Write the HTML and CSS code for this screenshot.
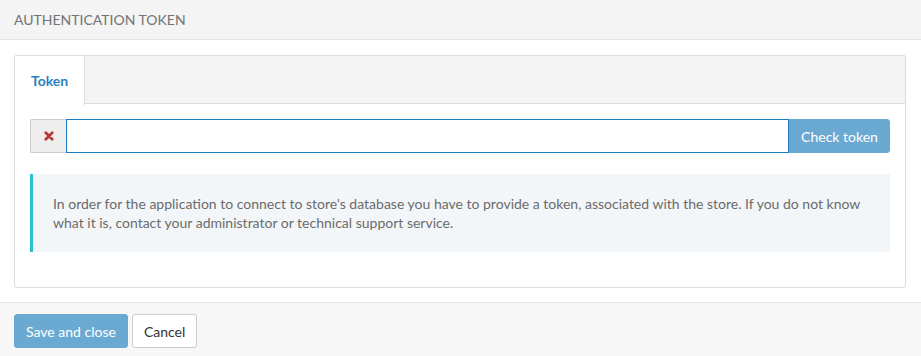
FILE: index.html
```html
<!DOCTYPE html>
<html lang="en">
<head>
  <meta charset="UTF-8">
  <title>Authentication token</title>
  <link rel="stylesheet" href="styles.css">
</head>
<body>
  <div class="modal">
    <div class="modal-header">Authentication token</div>
    <div class="modal-body">
      <div class="panel">
        <div class="tabs">
          <div class="tab active">Token</div>
          <div class="tab-fill"></div>
        </div>
        <div class="panel-body">
          <div class="input-group">
            <span class="addon">
              <svg width="10" height="10" viewBox="0 0 10 10">
                <path d="M1.8 1.8 L8.2 8.2 M8.2 1.8 L1.8 8.2" stroke="#b83a36" stroke-width="2.8" stroke-linecap="round"/>
              </svg>
            </span>
            <input type="text" class="token-input">
            <button type="button" class="btn btn-primary btn-attached">Check token</button>
          </div>
          <div class="info">
            In order for the application to connect to store's database you have to provide a token, associated with the store. If you do not know what it is, contact your administrator or technical support service.
          </div>
        </div>
      </div>
    </div>
    <div class="modal-footer">
      <button type="button" class="btn btn-primary">Save and close</button>
      <button type="button" class="btn btn-default">Cancel</button>
    </div>
  </div>
</body>
</html>
```
FILE: styles.css
```css
body {
  margin: 0;
  font-family: Lato, "Open Sans", sans-serif;
  font-size: 14px;
  color: #333;
  background-color: #fff;
}
.modal {
  width: 921px;
  height: 356px;
  display: flex;
  flex-direction: column;
}
.modal-header {
  height: 39px;
  line-height: 39px;
  padding: 0 14px;
  background-color: #f4f4f4;
  border-bottom: 1px solid #e5e5e5;
  color: #737373;
  text-transform: uppercase;
  font-size: 14px;
}
.modal-body {
  padding: 15px 15px 14px 14px;
}
.panel {
  border: 1px solid #dcdcdc;
  border-radius: 2px;
}
.tabs {
  display: flex;
  height: 48px;
  background-color: #f4f4f4;
}
.tab {
  padding: 0 16px;
  line-height: 50px;
  font-weight: bold;
  color: #2a7fc1;
}
.tab.active {
  background-color: #fff;
  border-right: 1px solid #dcdcdc;
  height: 49px;
}
.tab-fill {
  flex: 1;
  border-bottom: 1px solid #dcdcdc;
}
.panel-body {
  padding: 15px 15px 15px 15px;
}
.input-group {
  display: flex;
  height: 34px;
}
.addon {
  width: 35px;
  display: flex;
  align-items: center;
  justify-content: center;
  background-color: #eee;
  border: 1px solid #ccc;
  border-right: none;
  border-radius: 2px 0 0 2px;
}
.token-input {
  flex: 1;
  margin: 0;
  padding: 0 10px;
  border: 1px solid #1e7cc1;
  outline: none;
  font-family: inherit;
  font-size: 14px;
}
.btn {
  font-family: inherit;
  font-size: 14px;
  height: 34px;
  padding: 0 11px;
  border-radius: 3px;
  cursor: pointer;
}
.btn-primary {
  background-color: #69a9d2;
  border: 1px solid #69a9d2;
  color: #fff;
}
.btn-attached {
  border-radius: 0 3px 3px 0;
  width: 101px;
  padding: 0;
}
.btn-default {
  background-color: #fff;
  border: 1px solid #ccc;
  color: #333;
}
.info {
  margin: 21px 0 20px 0;
  padding: 20px 20px 20px 20px;
  background-color: #f3f6f9;
  border-left: 3px solid #2ac1cc;
  color: #6b6b6b;
  font-size: 14px;
  line-height: 19px;
}
.modal-footer {
  flex: 1;
  display: flex;
  gap: 4px;
  padding: 11px 14px;
  background-color: #f7f7f7;
  border-top: 1px solid #e5e5e5;
}
```
